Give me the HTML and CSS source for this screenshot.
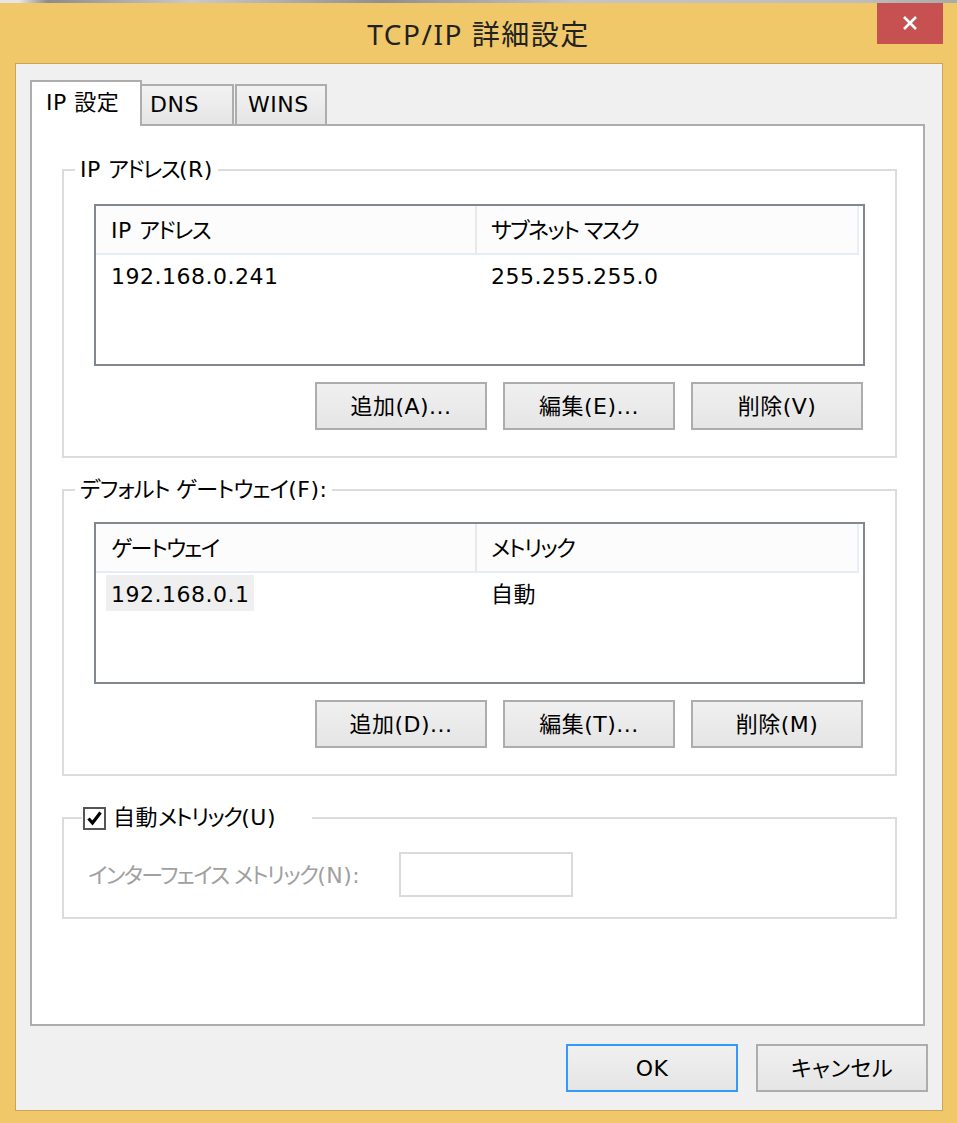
FILE: index.html
```html
<!DOCTYPE html>
<html lang="ja">
<head>
<meta charset="utf-8">
<title>TCP/IP 詳細設定</title>
<link rel="stylesheet" href="styles.css">
</head>
<body>
<div class="screen">
  <div class="strip"></div>
  <div class="titlebar">
    <div class="title">TCP/IP 詳細設定</div>
    <div class="close">
      <svg width="66" height="41" viewBox="0 0 66 41"><path d="M27 14 L39 26 M39 14 L27 26" stroke="#fff" stroke-width="2.6" fill="none"/></svg>
    </div>
  </div>
  <div class="client">
    <div class="tabs">
      <div class="tab active">IP 設定</div>
      <div class="tab inactive dns">DNS</div>
      <div class="tab inactive wins">WINS</div>
    </div>
    <div class="panel">
      <fieldset class="group g1">
        <legend>IP <span class="kn">アドレス</span>(R)</legend>
        <div class="list l1">
          <div class="lhead"><div class="c1">IP <span class="kn">アドレス</span></div><div class="c2"><span class="kn">サブネット マスク</span></div></div>
          <div class="lrow"><div class="c1"><span>192.168.0.241</span></div><div class="c2">255.255.255.0</div></div>
        </div>
        <div class="btnrow">
          <div class="btn">追加(A)...</div>
          <div class="btn">編集(E)...</div>
          <div class="btn">削除(V)</div>
        </div>
      </fieldset>
      <fieldset class="group g2">
        <legend><span class="kn2">デフォルト ゲートウェイ</span>(F):</legend>
        <div class="list l2">
          <div class="lhead"><div class="c1"><span class="kn">ゲートウェイ</span></div><div class="c2"><span class="kn">メトリック</span></div></div>
          <div class="lrow"><div class="c1"><span class="sel">192.168.0.1</span></div><div class="c2">自動</div></div>
        </div>
        <div class="btnrow">
          <div class="btn">追加(D)...</div>
          <div class="btn">編集(T)...</div>
          <div class="btn">削除(M)</div>
        </div>
      </fieldset>
      <fieldset class="group g3">
        <legend class="cblegend">
          <span class="checkbox"><svg width="19" height="19" viewBox="0 0 19 19"><path d="M3.5 9.5 L7.5 14 L15.5 3.5" stroke="#000" stroke-width="3.2" fill="none"/></svg></span>
          <span class="cblabel">自動<span class="kn">メトリック</span>(U)</span>
        </legend>
        <div class="metric">
          <div class="mlabel"><span class="kn">インターフェイス メトリック</span>(N):</div>
          <div class="minput"></div>
        </div>
      </fieldset>
    </div>
    <div class="footer">
      <div class="btn ok">OK</div>
      <div class="btn">キャンセル</div>
    </div>
  </div>
</div>
</body>
</html>
```
FILE: styles.css
```css
* { box-sizing: border-box; }
html, body { margin: 0; padding: 0; }
body {
  background: #F0C86A;
  font-family: "DejaVu Sans", "Noto Sans CJK JP", sans-serif;
  font-feature-settings: "palt";
  color: #000;
}
.screen {
  width: 957px;
  height: 1123px;
  background: #F0C86A;
  position: relative;
  overflow: hidden;
}
.strip {
  height: 3px;
  background: linear-gradient(90deg, #e6e6e6 0, #e6e6e6 2%, #8c8c8c 5%, #c9c9c9 20%, #8f8f8f 40%, #c4c4c4 60%, #bdbdbd 90%, #a9a9a5 100%);
}
.titlebar {
  height: 60px;
  position: relative;
  display: flex;
  justify-content: center;
}
.title {
  font-family: "Noto Sans", "Noto Sans CJK JP", sans-serif;
  font-size: 28px;
  letter-spacing: 1.5px;
  line-height: 60px;
  padding-top: 1px;
  color: #222;
}
.close {
  position: absolute;
  top: 0;
  right: 14px;
  width: 66px;
  height: 41px;
  background: #C75050;
}
.close svg { display: block; }

.kn { letter-spacing: -1.6px; }
.kn2 { letter-spacing: -0.8px; }

.client {
  margin-left: 15px;
  width: 928px;
  height: 1048px;
  border: 1px solid #C9A458;
  background: #F0F0F0;
  padding: 16px 17px 0 14px;
}
.tabs {
  display: flex;
  align-items: flex-end;
  height: 44px;
}
.tab {
  border: 2px solid #ADADAD;
  border-bottom: none;
  font-size: 22px;
  letter-spacing: 0.5px;
  white-space: nowrap;
}
.tab.active {
  width: 112px;
  height: 46px;
  margin-bottom: -2px;
  background: #fff;
  padding: 1px 0 3px 14px;
  line-height: 40px;
  position: relative;
  z-index: 1;
}
.tab.inactive {
  height: 40px;
  line-height: 38px;
  background: linear-gradient(#F2F2F2, #E5E5E5);
}
.tab.dns { width: 92px; border-left: none; padding-left: 8px; }
.tab.wins { width: 92px; margin-left: 1px; padding-left: 11px; }

.panel {
  width: 895px;
  height: 902px;
  border: 2px solid #ADADAD;
  background: #fff;
  padding: 29px 26px 0 30px;
}
.group {
  margin: 0;
  padding: 0;
  min-width: 0;
  border: 2px solid #DCDCDC;
  font-size: 22px;
  letter-spacing: 0.5px;
}
.group legend {
  padding: 0 5px;
  margin-left: 11px;
  line-height: 30px;
}
.g2 { margin-top: 17px; }
.g3 { margin-top: 27px; }

.list {
  margin: 19px 30px 0 30px;
  height: 162px;
  border: 2px solid #828790;
  background: #fff;
}
.l2 { margin-top: 17px; }
.lhead {
  display: flex;
  width: 763px;
  height: 49px;
  background: #FCFCFC;
  border-bottom: 2px solid #E3ECF8;
  border-right: 2px solid #E6EEF9;
  line-height: 50px;
}
.lhead .c1 {
  width: 381px;
  padding-left: 15px;
  border-right: 2px solid #E8E8E8;
}
.lhead .c2 { padding-left: 14px; }
.lrow {
  display: flex;
  height: 36px;
  margin-top: 2px;
  line-height: 39px;
}
.lrow .c1 { width: 381px; padding-left: 10px; }
.lrow .c1 span {
  display: inline-block;
  vertical-align: top;
  height: 36px;
  padding: 0 5px;
}
.lrow .c1 span.sel { background: #EFEFEF; }
.lrow .c2 { padding-left: 14px; }

.btnrow {
  display: flex;
  justify-content: flex-end;
  gap: 16px;
  margin: 16px 32px 0 0;
  padding-bottom: 26px;
}
.btn {
  width: 172px;
  height: 48px;
  border: 2px solid #ADADAD;
  background: linear-gradient(#F0F0F0, #E5E5E5);
  font-size: 22px;
  letter-spacing: 0.5px;
  text-align: center;
  line-height: 46px;
  white-space: nowrap;
}
.btn.ok { border-color: #3399FF; }

.group legend.cblegend {
  display: flex;
  align-items: center;
  margin-left: 18px;
  padding: 0 36px 0 1px;
}
.checkbox {
  width: 23px;
  height: 23px;
  border: 2px solid #555;
  background: #fff;
  display: flex;
  align-items: center;
  justify-content: center;
  margin-right: 7px;
}
.checkbox svg { display: block; }
.cblabel { line-height: 30px; }
.metric {
  display: flex;
  align-items: center;
  margin: 19px 0 0 24px;
  padding-bottom: 20px;
}
.mlabel {
  width: 311px;
  color: #A0A0A0;
  line-height: 30px;
  padding-top: 2px;
  white-space: nowrap;
}
.minput {
  width: 174px;
  height: 45px;
  border: 2px solid #DADADA;
  background: #fff;
}
.footer {
  display: flex;
  justify-content: flex-end;
  gap: 18px;
  margin: 18px -3px 0 0;
}
```
